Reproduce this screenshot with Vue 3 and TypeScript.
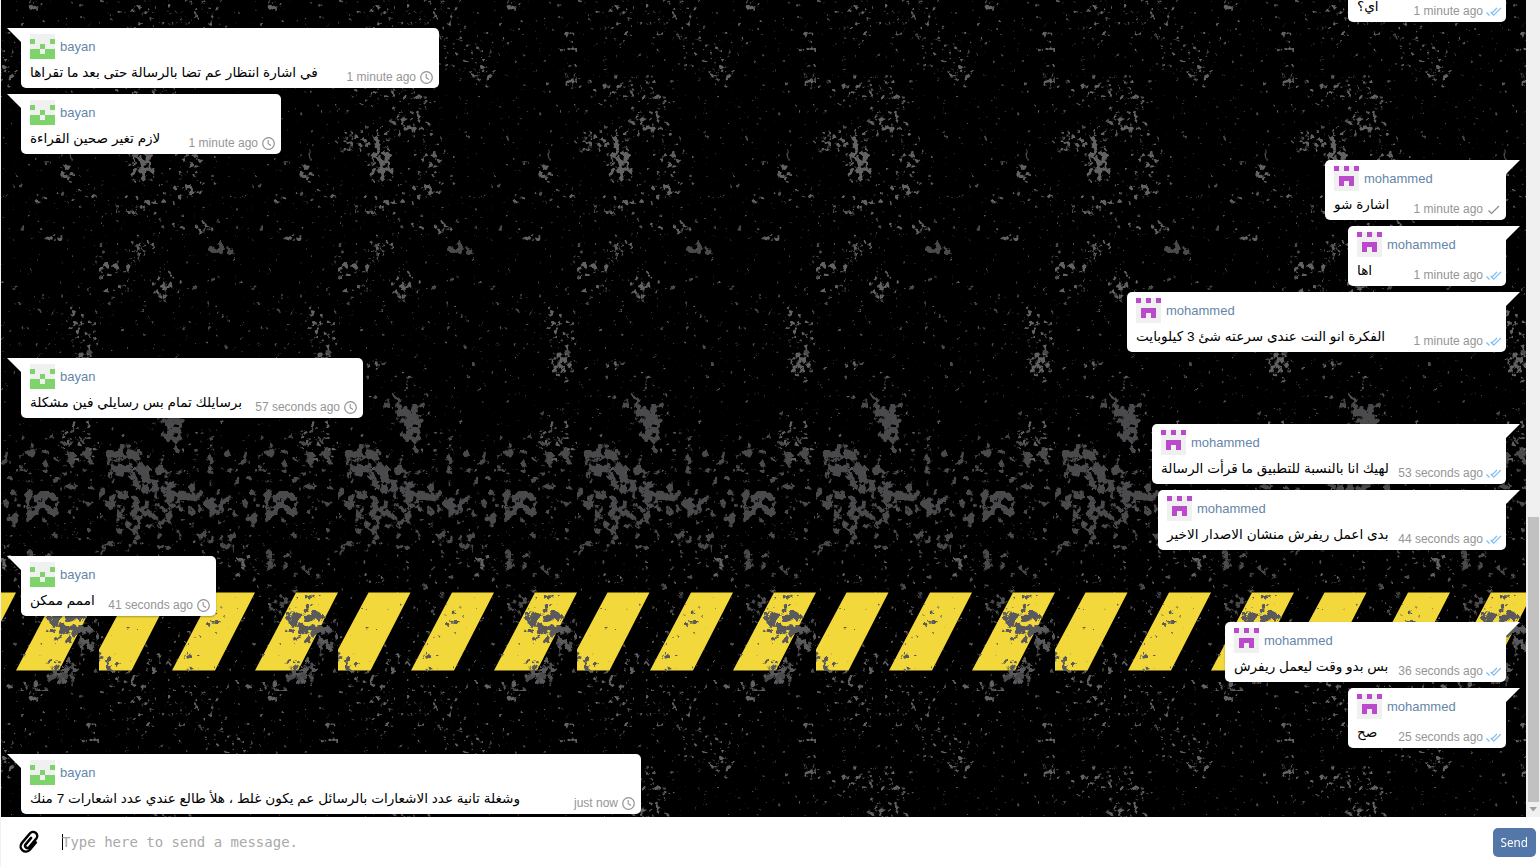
<script setup lang="ts">
interface Message {
  user: 'bayan' | 'mohammed'
  text: string
  time: string
  width: number
  state: 'pending' | 'sent' | 'read'
}

const messages: Message[] = [
  { user: 'mohammed', text: 'اي؟', time: '1 minute ago', width: 158, state: 'read' },
  { user: 'bayan', text: 'في اشارة انتظار عم تضا بالرسالة حتى بعد ما تقراها', time: '1 minute ago', width: 418, state: 'pending' },
  { user: 'bayan', text: 'لازم تغير صحين القراءة', time: '1 minute ago', width: 260, state: 'pending' },
  { user: 'mohammed', text: 'اشارة شو', time: '1 minute ago', width: 181, state: 'sent' },
  { user: 'mohammed', text: 'اها', time: '1 minute ago', width: 158, state: 'read' },
  { user: 'mohammed', text: 'الفكرة انو النت عندى سرعته شئ 3 كيلوبايت', time: '1 minute ago', width: 379, state: 'read' },
  { user: 'bayan', text: 'برسايلك تمام بس رسايلي فين مشكلة', time: '57 seconds ago', width: 342, state: 'pending' },
  { user: 'mohammed', text: 'لهيك انا بالنسبة للتطبيق ما قرأت الرسالة', time: '53 seconds ago', width: 354, state: 'read' },
  { user: 'mohammed', text: 'بدى اعمل ريفرش منشان الاصدار الاخير', time: '44 seconds ago', width: 348, state: 'read' },
  { user: 'bayan', text: 'اممم ممكن', time: '41 seconds ago', width: 195, state: 'pending' },
  { user: 'mohammed', text: 'بس بدو وقت ليعمل ريفرش', time: '36 seconds ago', width: 281, state: 'read' },
  { user: 'mohammed', text: 'صح', time: '25 seconds ago', width: 158, state: 'read' },
  { user: 'bayan', text: 'وشغلة تانية عدد الاشعارات بالرسائل عم يكون غلط ، هلأ طالع عندي عدد اشعارات 7 منك', time: 'just now', width: 620, state: 'pending' },
]

// Wear density of the wallpaper tile: [x, y, rx, ry, strength]
type Patch = [number, number, number, number, number]
const fine: Patch[] = [
  [145, 75, 12, 10, 0.75], [130, 55, 30, 20, 0.35], [232, 45, 10, 18, 0.5], [234, 78, 10, 12, 0.7],
  [50, 90, 45, 14, 0.5], [20, 140, 30, 10, 0.7], [43, 162, 13, 20, 1], [60, 125, 22, 14, 0.55],
  [43, 160, 8, 10, 0.7],
  [80, 115, 16, 22, 0.45], [93, 160, 14, 30, 0.55], [85, 192, 20, 8, 0.6], [45, 205, 30, 12, 0.55],
  [208, 172, 8, 9, 0.95], [183, 201, 12, 4, 0.6], [222, 198, 20, 14, 0.4], [195, 238, 10, 4, 0.75],
  [104, 228, 9, 9, 0.75], [80, 227, 8, 5, 0.6], [42, 248, 14, 12, 0.7], [12, 268, 16, 8, 0.8],
  [66, 286, 14, 14, 0.75], [18, 291, 14, 8, 0.6], [32, 265, 5, 12, 0.6], [30, 20, 50, 20, 0.25],
  [100, 20, 25, 20, 0.4], [175, 5, 8, 7, 0.6], [225, 350, 14, 30, 0.6], [222, 365, 10, 10, 0.9],
  [215, 320, 8, 14, 0.6], [35, 365, 8, 5, 0.7], [45, 395, 20, 8, 0.4], [70, 378, 10, 8, 0.4],
  [145, 565, 16, 12, 0.6], [222, 440, 20, 24, 0.55], [40, 580, 20, 6, 0.45], [30, 680, 30, 14, 0.5],
  [60, 665, 30, 12, 0.4], [160, 685, 30, 8, 0.5], [180, 690, 16, 8, 0.5], [50, 8, 30, 8, 0.4],
]
const coarse: Patch[] = [
  [72, 418, 16, 20, 1], [53, 403, 9, 6, 1], [30, 464, 28, 18, 0.95], [60, 485, 20, 14, 0.95],
  [42, 515, 28, 16, 0.8], [86, 500, 18, 14, 0.95], [118, 504, 16, 9, 0.9], [75, 440, 8, 12, 0.8],
  [105, 433, 18, 6, 0.5], [178, 504, 20, 14, 0.85], [155, 516, 10, 6, 0.9], [14, 498, 22, 10, 0.6],
  [174, 448, 9, 7, 0.7], [205, 438, 24, 10, 0.5], [216, 455, 22, 10, 0.5], [107, 537, 9, 8, 0.7],
  [130, 544, 8, 12, 0.6], [64, 546, 8, 4, 0.7], [176, 566, 12, 10, 0.8], [206, 573, 14, 8, 0.6],
  [20, 540, 20, 10, 0.45], [123, 249, 14, 7, 1], [105, 454, 14, 8, 0.5], [190, 480, 50, 30, 0.25],
  [120, 500, 130, 60, 0.25],
  [182, 610, 14, 18, 0.65], [226, 636, 14, 16, 0.7], [202, 672, 18, 12, 0.8], [180, 692, 9, 7, 0.6],
]
const stripeWear: Patch[] = [
  [208, 622, 16, 15, 1], [192, 618, 9, 10, 0.8], [217, 618, 6, 14, 1], [205, 632, 16, 10, 0.9],
  [205, 600, 20, 9, 0.4], [202, 670, 14, 14, 0.9], [8, 664, 14, 9, 0.65], [1, 655, 6, 8, 0.6],
  [92, 662, 22, 8, 0.4], [112, 620, 20, 14, 0.4], [90, 640, 8, 12, 0.3], [226, 638, 13, 14, 0.8],
]
const layers = [
  { filter: 'url(#fine-wear)', patches: fine },
  { filter: 'url(#coarse-wear)', patches: coarse },
]
</script>

<template>
  <main class="chat">
    <section class="conversation">
      <div class="feed">
        <svg class="wallpaper" width="1525" height="817" aria-hidden="true">
          <defs>
            <radialGradient id="patch">
              <stop offset="0" stop-color="#000" stop-opacity="1" />
              <stop offset="0.55" stop-color="#000" stop-opacity="0.75" />
              <stop offset="1" stop-color="#000" stop-opacity="0" />
            </radialGradient>
            <filter id="fine-wear" filterUnits="userSpaceOnUse" x="0" y="0" width="239" height="691" color-interpolation-filters="sRGB">
              <feTurbulence type="fractalNoise" baseFrequency="0.19" numOctaves="3" seed="8" />
              <feColorMatrix values="0 0 0 0 0  0 0 0 0 0  0 0 0 0 0  1 0 0 0 0" result="n" />
              <feComposite in="n" in2="SourceGraphic" operator="arithmetic" k1="0" k2="1" k3="0.4" k4="-0.25" />
              <feComponentTransfer result="mask"><feFuncA type="linear" slope="9" intercept="-4.7" /></feComponentTransfer>
              <feFlood flood-color="#626264" />
              <feComposite in2="mask" operator="in" />
            </filter>
            <filter id="coarse-wear" filterUnits="userSpaceOnUse" x="0" y="0" width="239" height="691" color-interpolation-filters="sRGB">
              <feTurbulence type="fractalNoise" baseFrequency="0.12" numOctaves="4" seed="33" />
              <feColorMatrix values="0 0 0 0 0  0 0 0 0 0  0 0 0 0 0  1 0 0 0 0" result="n" />
              <feComposite in="n" in2="SourceGraphic" operator="arithmetic" k1="0" k2="1" k3="0.4" k4="-0.25" />
              <feComponentTransfer result="mask"><feFuncA type="linear" slope="14" intercept="-7.1" /></feComponentTransfer>
              <feFlood flood-color="#4a4a4c" />
              <feComposite in2="mask" operator="in" />
            </filter>
            <filter id="stripe-wear" filterUnits="userSpaceOnUse" x="0" y="0" width="239" height="691" color-interpolation-filters="sRGB">
              <feTurbulence type="fractalNoise" baseFrequency="0.15" numOctaves="4" seed="5" />
              <feColorMatrix values="0 0 0 0 0  0 0 0 0 0  0 0 0 0 0  1 0 0 0 0" result="n" />
              <feComposite in="n" in2="SourceGraphic" operator="arithmetic" k1="0" k2="1" k3="0.4" k4="-0.25" />
              <feComponentTransfer result="mask"><feFuncA type="linear" slope="14" intercept="-7.4" /></feComponentTransfer>
              <feFlood flood-color="#5a5a5c" />
              <feComposite in2="mask" operator="in" />
            </filter>
            <pattern id="tile" x="98" y="0" width="239" height="691" patternUnits="userSpaceOnUse">
              <rect width="239" height="691" fill="#000" />
              <g v-for="layer in layers" :key="layer.filter" :filter="layer.filter">
                <ellipse
                  v-for="(p, i) in layer.patches"
                  :key="i"
                  :cx="p[0]" :cy="p[1]" :rx="p[2] * 1.35" :ry="p[3] * 1.35"
                  :opacity="p[4]"
                  fill="url(#patch)"
                />
              </g>
              <path d="M30.5 592.5H72.5L32.5 670.5H0V649.5ZM114 592.5H156L116 670.5H73ZM197 592.5H239L199 670.5H156Z" fill="#f3d83b" />
              <g filter="url(#stripe-wear)">
                <ellipse
                  v-for="(p, i) in stripeWear"
                  :key="i"
                  :cx="p[0]" :cy="p[1]" :rx="p[2] * 1.35" :ry="p[3] * 1.35"
                  :opacity="p[4]"
                  fill="url(#patch)"
                />
              </g>
            </pattern>
          </defs>
          <rect width="1525" height="817" fill="url(#tile)" />
        </svg>
        <article
          v-for="(m, i) in messages"
          :key="i"
          class="message"
          :class="m.user === 'mohammed' ? 'own' : 'other'"
          :style="{ width: m.width + 'px' }"
        >
          <header class="sender">
            <svg v-if="m.user === 'bayan'" class="avatar" viewBox="0 0 25 25">
              <rect width="25" height="25" fill="#f0f0f0" />
              <path d="M-3 5H5V10H-3ZM20 5H28V10H20ZM10 10H15V15H10ZM-3 15H10V20H15V15H28V28H-3Z" fill="#7fd36b" />
            </svg>
            <svg v-else class="avatar" viewBox="0 0 25 25">
              <rect width="25" height="25" fill="#f0f0f0" />
              <path d="M-3 -3H5V5H-3ZM10 -3H15V5H10ZM20 -3H28V5H20ZM5 10H20V20H15V15H10V20H5Z" fill="#ba49cb" />
            </svg>
            <span class="name">{{ m.user }}</span>
          </header>
          <div class="body">
            <p class="text" dir="rtl">{{ m.text }}</p>
            <span class="meta">
              <time>{{ m.time }}</time>
              <svg v-if="m.state === 'pending'" class="status" viewBox="0 0 15 15">
                <circle cx="7.5" cy="7.5" r="5.8" fill="none" stroke="#929292" stroke-width="1.2" />
                <path d="M7.2 4V7.8L10 9.5" fill="none" stroke="#929292" stroke-width="1.1" />
              </svg>
              <svg v-else-if="m.state === 'sent'" class="status" viewBox="0 0 15 15">
                <path d="M2.5 8.5L5.5 11.5L13 4" fill="none" stroke="#8a8a8a" stroke-width="1.2" />
              </svg>
              <svg v-else class="status" viewBox="0 0 15 15">
                <path d="M0.5 8.5L3.5 11.5M5.3 9.7L11 4M4.6 7.8L7.8 11.2L15 4" fill="none" stroke="#7dbdf0" stroke-width="1.2" />
              </svg>
            </span>
          </div>
        </article>
      </div>
      <div class="scrollbar">
        <div class="thumb"></div>
        <svg class="arrow" width="14" height="15" viewBox="0 0 14 15"><path d="M3.5 5H11L7.2 9.5Z" fill="#a0a0a0" /></svg>
      </div>
    </section>
    <footer class="composer">
      <svg class="clip" width="24" height="26" viewBox="0 0 24 26">
        <path transform="rotate(40 12 13)" d="M17.6 9V18.4a5.2 5.2 0 0 1-10.4 0V6a4.1 4.1 0 0 1 8.2-.4V17a2.2 2.2 0 0 1-4.4 0V8.5" fill="none" />
      </svg>
      <div class="entry"><span class="caret"></span><span class="placeholder">Type here to send a message.</span></div>
      <button class="send" type="button"><span>Send</span></button>
    </footer>
  </main>
</template>

<style>
body {
  margin: 0;
  overflow: hidden;
}
</style>

<style scoped>
.chat {
  width: 1540px;
  height: 867px;
  display: flex;
  flex-direction: column;
  background: #fff;
  font-family: 'Liberation Sans', 'DejaVu Sans', sans-serif;
}
.conversation {
  height: 817px;
  display: flex;
  flex: none;
}
.feed {
  position: relative;
  box-sizing: border-box;
  width: 1526px;
  height: 817px;
  padding: 0 20px 3px;
  border-left: 1px solid #f1f1f1;
  display: flex;
  flex-direction: column;
  justify-content: flex-end;
  gap: 6px;
  overflow: hidden;
}
.wallpaper {
  position: absolute;
  left: 0;
  top: 0;
}
.message {
  position: relative;
  box-sizing: border-box;
  flex: none;
  height: 60px;
  padding: 6px 5px 0 9px;
  background: #fff;
  border-radius: 5px;
  box-shadow: 0 1px 2px rgba(0, 0, 0, 0.3);
}
.message::before {
  content: '';
  position: absolute;
  top: 0;
  width: 14px;
  height: 14px;
  background: #fff;
}
.other {
  align-self: flex-start;
  border-top-left-radius: 0;
}
.own {
  align-self: flex-end;
  border-top-right-radius: 0;
}
.other::before {
  left: -14px;
  clip-path: polygon(0 0, 100% 0, 100% 100%);
}
.own::before {
  right: -14px;
  clip-path: polygon(0 0, 100% 0, 0 100%);
}
.sender {
  display: flex;
  height: 25px;
  gap: 5px;
}
.avatar {
  width: 25px;
  height: 25px;
  overflow: hidden;
}
.avatar path {
  filter: blur(0.6px);
}
.name {
  font-size: 13px;
  line-height: 25px;
  color: #6585a8;
}
.body {
  display: flex;
  justify-content: space-between;
  height: 28px;
}
.text {
  margin: 0;
  font-size: 13.6px;
  line-height: 28px;
  color: #000;
  white-space: nowrap;
}
.meta {
  display: flex;
  gap: 3px;
  padding-top: 11px;
  font-size: 12px;
  line-height: 14px;
  color: #959595;
  white-space: nowrap;
}
.status {
  width: 15px;
  height: 15px;
}
.scrollbar {
  width: 14px;
  background: #f0f0f0;
  display: flex;
  flex-direction: column;
  justify-content: flex-end;
}
.thumb {
  height: 285px;
  margin: 0 1px 0 2px;
  background: #c1c1c1;
}
.arrow {
  display: block;
}
.composer {
  box-sizing: border-box;
  height: 50px;
  display: flex;
  align-items: center;
  padding: 0 4px 0 16px;
  border-left: 1px solid #f1f1f1;
}
.clip {
  overflow: visible;
}
.clip path {
  stroke: #000;
  stroke-width: 2.5;
  stroke-linecap: round;
}
.entry {
  flex: 1;
  display: flex;
  align-items: center;
  margin-left: 21px;
}
.caret {
  width: 1px;
  height: 16px;
  background: #000;
}
.placeholder {
  margin-left: -1px;
  font-family: 'DejaVu Sans Mono', monospace;
  font-size: 14px;
  color: #a9a9a9;
}
.send {
  width: 43px;
  height: 29px;
  padding: 0;
  border: 0;
  border-radius: 5px;
  background: #5277a8;
  color: #fff;
  font-family: 'Noto Sans', sans-serif;
  font-size: 13px;
}
.send span {
  display: inline-block;
  transform: scaleX(0.9);
}
</style>
